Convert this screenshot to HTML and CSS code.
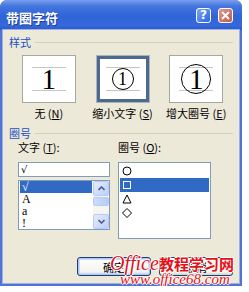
FILE: index.html
```html
<!DOCTYPE html>
<html>
  <head>
    <title>带圈字符</title>
    <link rel="stylesheet" href="styles.css">
  </head>
  <body>
    <div class="window">
      <div class="titlebar">
        <span class="title">带圈字符</span>
        <span class="tb-btn help">?</span>
        <span class="tb-btn close">
          <svg width="9" height="9" viewBox="0 0 9 9"><path d="M1 1 L8 8 M8 1 L1 8" stroke="#fff" stroke-width="1.8" /></svg>
        </span>
      </div>

      <div class="client">
        <div class="legend">样式</div>
        <div class="styles">
          <div class="style-item">
            <div class="preview">
              <div class="guide"><span class="digit">1</span></div>
            </div>
            <div class="caption">无 (<u>N</u>)</div>
          </div>
          <div class="style-item">
            <div class="preview selected">
              <div class="guide"><span class="ring small">1</span></div>
            </div>
            <div class="caption">缩小文字 (<u>S</u>)</div>
          </div>
          <div class="style-item">
            <div class="preview">
              <div class="guide"><span class="ring big">1</span></div>
            </div>
            <div class="caption">增大圈号 (<u>E</u>)</div>
          </div>
        </div>

        <div class="legend second">圈号</div>
        <div class="pickers">
          <div class="picker left">
            <div class="field-label">文字 (<u>T</u>):</div>
            <div class="textbox">√</div>
            <div class="listbox">
              <ul class="items">
                <li class="selected">√</li>
                <li>A</li>
                <li>a</li>
                <li>!</li>
              </ul>
              <div class="scrollbar">
                <div class="sb-btn">
                  <svg width="7" height="5" viewBox="0 0 7 5"><path d="M0.5 4 L3.5 1 L6.5 4" fill="none" stroke="#4d6185" stroke-width="1.6" /></svg>
                </div>
                <div class="sb-thumb"></div>
                <div class="sb-space"></div>
                <div class="sb-btn">
                  <svg width="7" height="5" viewBox="0 0 7 5"><path d="M0.5 1 L3.5 4 L6.5 1" fill="none" stroke="#4d6185" stroke-width="1.6" /></svg>
                </div>
              </div>
            </div>
          </div>
          <div class="picker right">
            <div class="field-label">圈号 (<u>O</u>):</div>
            <div class="listbox tall">
              <ul class="items symbols">
                <li><svg width="10" height="10" viewBox="0 0 10 10"><circle cx="5" cy="5" r="4" fill="none" stroke="#000" /></svg></li>
                <li class="selected"><svg width="10" height="10" viewBox="0 0 10 10"><rect x="1.5" y="1.5" width="7" height="7" fill="none" stroke="#fff" /></svg></li>
                <li><svg width="10" height="10" viewBox="0 0 10 10"><path d="M5 1 L9 9 L1 9 Z" fill="none" stroke="#000" /></svg></li>
                <li><svg width="10" height="10" viewBox="0 0 10 10"><path d="M5 0.5 L9.5 5 L5 9.5 L0.5 5 Z" fill="none" stroke="#000" /></svg></li>
              </ul>
            </div>
          </div>
        </div>

        <div class="buttons">
          <button class="btn default">确定</button>
          <button class="btn">取消</button>
        </div>
      </div>

      <div class="watermark">
        <div class="wm-top"><span class="wm-office">Office</span><span class="wm-cn">教程学习网</span></div>
        <div class="wm-url">www.office68.com</div>
      </div>
    </div>
  </body>
</html>
```

FILE: styles.css
```css
* {
  box-sizing: border-box;
}
body {
  margin: 0;
  background-color: #fff;
  font-family: "Noto Sans CJK SC", sans-serif;
  font-size: 11px;
  color: #000;
}
.window {
  position: relative;
  width: 242px;
  height: 286px;
  display: flex;
  flex-direction: column;
  background-color: #5073d4; /* frame colour */
  border-radius: 7px 7px 0 0;
}
.titlebar {
  height: 30px;
  flex: none;
  display: flex;
  align-items: center;
  padding: 0 9px 0 6px;
  border-radius: 7px 7px 0 0;
  background: linear-gradient(#7aa0ee, #4476de 20%, #2f64d8 55%, #3568da 85%, #2b5acb);
}
.title {
  flex: 1;
  color: #fff;
  font-size: 13px;
  font-weight: bold;
  line-height: 16px;
  padding-top: 5px;
  text-shadow: 1px 1px #1d3f9e;
}
.tb-btn {
  width: 15px;
  height: 15px;
  margin-left: 7px;
  border: 1px solid #fff;
  border-radius: 3px;
  display: flex;
  align-items: center;
  justify-content: center;
  color: #fff;
  font: bold 12px "DejaVu Sans", sans-serif;
}
.help {
  background: linear-gradient(135deg, #7aa6f4, #2d66dc);
}
.close {
  background: linear-gradient(135deg, #dc9a8c, #c25a4e);
}
.client {
  flex: 1;
  margin: 0 3px 3px;
  padding: 5px 6px 7px;
  background-color: #ece9d8;
  box-shadow: 0 0 0 1px #9fb0e6;
  display: flex;
  flex-direction: column;
}
.legend {
  display: flex;
  align-items: center;
  gap: 4px;
  line-height: 14px;
  color: #1f4fc3;
}
.legend::after {
  content: "";
  flex: 1;
  border-top: 1px solid #d3d0bf;
  margin-top: 1px;
}
.legend.second {
  margin-top: 6px;
}
.styles {
  display: flex;
  margin-top: 6px;
  padding-left: 3px;
}
.style-item {
  width: 76px;
  display: flex;
  flex-direction: column;
  align-items: center;
}
.preview {
  width: 54px;
  height: 48px;
  background-color: #fff;
  border: 1px solid #a7a7a2;
  display: flex;
  align-items: center;
  justify-content: center;
}
.preview.selected {
  border-color: #aab3c0;
  box-shadow: inset 0 0 0 3px #4c6a8e;
}
.guide {
  width: 34px;
  height: 24px;
  border-top: 1px solid #c6c6c6;
  border-bottom: 1px solid #c6c6c6;
  display: flex;
  align-items: center;
  justify-content: center;
}
.digit {
  font-family: "Liberation Serif", serif;
  font-size: 29px;
  line-height: 1;
}
.ring {
  flex: none;
  border: 1px solid #000;
  border-radius: 50%;
  display: flex;
  align-items: center;
  justify-content: center;
  font-family: "Liberation Serif", serif;
  line-height: 1;
}
.ring.small {
  width: 22px;
  height: 22px;
  font-size: 18px;
}
.ring.big {
  width: 30px;
  height: 30px;
  border-width: 1.5px;
  font-size: 29px;
}
.caption {
  margin-top: 3px;
  line-height: 14px;
  white-space: nowrap;
}
.pickers {
  display: flex;
  gap: 8px;
  padding-left: 9px;
}
.picker.left {
  width: 92px;
}
.picker.right {
  width: 93px;
}
.field-label {
  line-height: 14px;
  margin-bottom: 8px;
  white-space: nowrap;
}
.textbox {
  height: 15px;
  border: 1px solid #7f9db9;
  background-color: #fff;
  padding-left: 2px;
  font: 10px/13px "DejaVu Sans", sans-serif;
}
.listbox {
  margin-top: 3px;
  height: 50px;
  border: 1px solid #7f9db9;
  background-color: #fff;
  display: flex;
}
.listbox.tall {
  margin-top: 0;
  height: 77px;
}
.items {
  list-style: none;
  margin: 0;
  padding: 0;
  flex: 1;
}
.items li {
  height: 12px;
  line-height: 12px;
  margin: 0 1px;
  padding-left: 2px;
  font-family: "Liberation Serif", serif;
  font-size: 12px;
}
.items li.selected {
  background-color: #316ac5;
  color: #fff;
}
.symbols {
  padding-top: 1px;
}
.symbols li {
  height: 14px;
  display: flex;
  align-items: center;
}
.scrollbar {
  width: 16px;
  display: flex;
  flex-direction: column;
  background-color: #f6f6f1;
}
.sb-btn {
  height: 15px;
  border: 1px solid #b7cbf6;
  border-radius: 2px;
  background: linear-gradient(135deg, #e4ecfe, #bdcff8);
  display: flex;
  align-items: center;
  justify-content: center;
}
.sb-thumb {
  height: 9px;
  margin-top: 1px;
  border: 1px solid #b7cbf6;
  border-radius: 2px;
  background: linear-gradient(90deg, #cddcfc, #b9ccf6);
}
.sb-space {
  flex: 1;
}
.buttons {
  margin-top: auto;
  display: flex;
  justify-content: flex-end;
  gap: 8px;
}
.btn {
  width: 74px;
  height: 19px;
  padding: 0;
  border: 1px solid #1c3f74;
  border-radius: 3px;
  background: linear-gradient(#ffffff, #f3f3ef 80%, #d8d3c8);
  font: 11px "Noto Sans CJK SC", sans-serif;
  color: #000;
}
.btn.default {
  box-shadow: inset 0 0 0 1px #aac6f5, inset 0 0 0 2px #cbdcfa;
}
/* watermark stamped over the dialog */
.watermark {
  position: absolute;
  left: 110px;
  top: 252px;
  color: #e3121a;
  text-shadow: 1px 0 #fff, -1px 0 #fff, 0 1px #fff, 0 -1px #fff;
  white-space: nowrap;
}
.wm-top {
  line-height: 19px;
}
.wm-office {
  font: italic 20px "Liberation Serif", serif;
}
.wm-cn {
  font-size: 15px;
  font-weight: bold;
}
.wm-url {
  margin: -3px 0 0 10px;
  font: italic 15px/15px "Liberation Serif", serif;
}
```
